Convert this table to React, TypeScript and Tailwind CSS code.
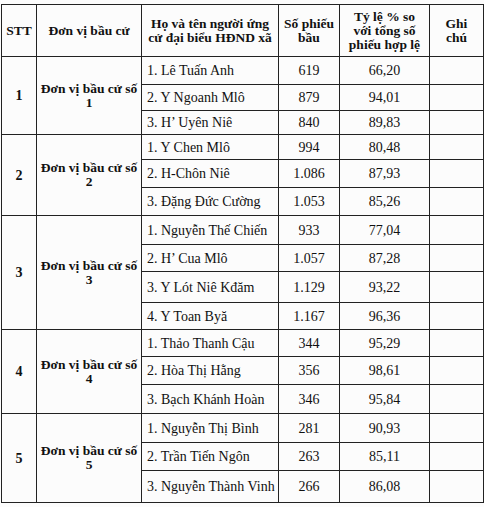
import React from "react";

type Cand = { name: string; votes: string; pct: string; h: number };
type Group = { stt: string; unit: string; cands: Cand[] };

const groups: Group[] = [
  {
    stt: "1",
    unit: "1",
    cands: [
      { name: "1. Lê Tuấn Anh", votes: "619", pct: "66,20", h: 28 },
      { name: "2. Y Ngoanh Mlô", votes: "879", pct: "94,01", h: 26 },
      { name: "3. H’ Uyên Niê", votes: "840", pct: "89,83", h: 24 },
    ],
  },
  {
    stt: "2",
    unit: "2",
    cands: [
      { name: "1. Y Chen Mlô", votes: "994", pct: "80,48", h: 25 },
      { name: "2. H-Chôn Niê", votes: "1.086", pct: "87,93", h: 28 },
      { name: "3. Đặng Đức Cường", votes: "1.053", pct: "85,26", h: 28 },
    ],
  },
  {
    stt: "3",
    unit: "3",
    cands: [
      { name: "1. Nguyễn Thế Chiến", votes: "933", pct: "77,04", h: 29 },
      { name: "2. H’ Cua Mlô", votes: "1.057", pct: "87,28", h: 27 },
      { name: "3. Y Lót Niê Kđăm", votes: "1.129", pct: "93,22", h: 31 },
      { name: "4. Y Toan Byă", votes: "1.167", pct: "96,36", h: 27 },
    ],
  },
  {
    stt: "4",
    unit: "4",
    cands: [
      { name: "1. Thảo Thanh Cậu", votes: "344", pct: "95,29", h: 27 },
      { name: "2. Hòa Thị Hằng", votes: "356", pct: "98,61", h: 28 },
      { name: "3. Bạch Khánh Hoàn", votes: "346", pct: "95,84", h: 29 },
    ],
  },
  {
    stt: "5",
    unit: "5",
    cands: [
      { name: "1. Nguyễn Thị Bình", votes: "281", pct: "90,93", h: 29 },
      { name: "2. Trần Tiến Ngôn", votes: "263", pct: "85,11", h: 28 },
      { name: "3. Nguyễn Thành Vinh", votes: "266", pct: "86,08", h: 32 },
    ],
  },
];

const cell = "border-[1.5px] border-[#222222] p-0";

export default function App() {
  return (
    <div
      className="w-[484px] h-[507px] bg-[#fcfcfc] pt-[4px] pl-[1px] text-[#111111] overflow-hidden"
      style={{ fontFamily: '"Liberation Serif", "Times New Roman", serif' }}
    >
      <table className="table-fixed border-collapse w-[482px] text-[14px]">
        <colgroup>
          <col className="w-[35px]" />
          <col className="w-[105px]" />
          <col className="w-[137px]" />
          <col className="w-[61px]" />
          <col className="w-[90px]" />
          <col className="w-[54px]" />
        </colgroup>
        <thead>
          <tr className="h-[52px] font-bold leading-[14px] text-center text-[13.5px]">
            <th className={cell}>STT</th>
            <th className={cell}>Đơn vị bầu cử</th>
            <th className={cell}>
              Họ và tên người ứng
              <br />
              cử đại biểu HĐND xã
            </th>
            <th className={cell}>
              Số phiếu
              <br />
              bầu
            </th>
            <th className={cell}>
              Tỷ lệ % so
              <br />
              với tổng số
              <br />
              phiếu hợp lệ
            </th>
            <th className={cell}>
              Ghi
              <br />
              chú
            </th>
          </tr>
        </thead>
        <tbody>
          {groups.map((g) =>
            g.cands.map((c, i) => (
              <tr key={g.stt + "-" + i} style={{ height: c.h }}>
                {i === 0 && (
                  <>
                    <td
                      rowSpan={g.cands.length}
                      className={cell + " text-center font-bold"}
                    >
                      {g.stt}
                    </td>
                    <td
                      rowSpan={g.cands.length}
                      className={cell + " text-center font-bold text-[13.5px] leading-[14px]"}
                    >
                      Đơn vị bầu cử số
                      <br />
                      {g.unit}
                    </td>
                  </>
                )}
                <td className={cell + " pl-[5px] whitespace-nowrap"}>{c.name}</td>
                <td className={cell + " text-center"}>{c.votes}</td>
                <td className={cell + " text-center"}>{c.pct}</td>
                <td className={cell}></td>
              </tr>
            ))
          )}
        </tbody>
      </table>
    </div>
  );
}
